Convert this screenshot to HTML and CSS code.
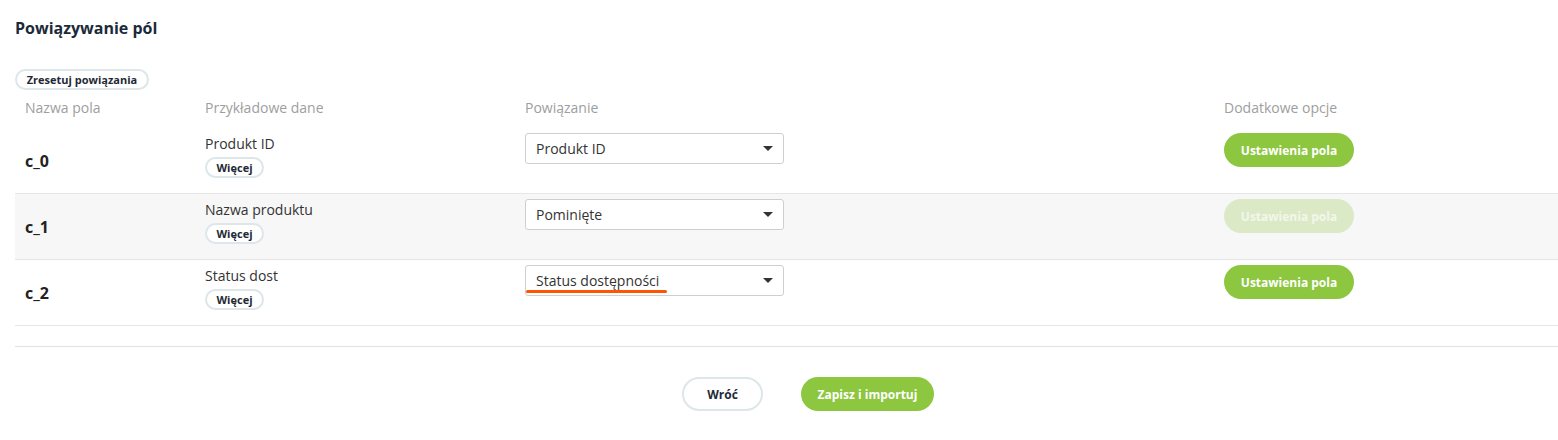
FILE: index.html
```html
<!DOCTYPE html>
<html lang="pl">
<head>
<meta charset="utf-8">
<title>Powiązywanie pól</title>
<link rel="stylesheet" href="styles.css">
</head>
<body>
<div class="page">
  <h1 class="title">Powiązywanie pól</h1>
  <button class="pill reset">Zresetuj powiązania</button>
  <div class="table">
    <div class="row head">
      <div class="cell">Nazwa pola</div>
      <div class="cell">Przykładowe dane</div>
      <div class="cell">Powiązanie</div>
      <div class="cell">Dodatkowe opcje</div>
    </div>
    <div class="row">
      <div class="cell name">c_0</div>
      <div class="cell sample"><div class="sample-text">Produkt ID</div><button class="pill more">Więcej</button></div>
      <div class="cell"><div class="select"><span class="select-text">Produkt ID</span><span class="caret"></span></div></div>
      <div class="cell"><button class="btn-green">Ustawienia pola</button></div>
    </div>
    <div class="row alt">
      <div class="cell name">c_1</div>
      <div class="cell sample"><div class="sample-text">Nazwa produktu</div><button class="pill more">Więcej</button></div>
      <div class="cell"><div class="select"><span class="select-text">Pominięte</span><span class="caret"></span></div></div>
      <div class="cell"><button class="btn-green disabled">Ustawienia pola</button></div>
    </div>
    <div class="row">
      <div class="cell name">c_2</div>
      <div class="cell sample"><div class="sample-text">Status dost</div><button class="pill more">Więcej</button></div>
      <div class="cell"><div class="select"><span class="select-text">Status dostępności</span><span class="caret"></span><span class="squiggle"></span></div></div>
      <div class="cell"><button class="btn-green">Ustawienia pola</button></div>
    </div>
  </div>
  <div class="footer">
    <button class="btn-outline">Wróć</button>
    <button class="btn-green btn-save">Zapisz i importuj</button>
  </div>
</div>
</body>
</html>
```

FILE: styles.css
```css
* { box-sizing: border-box; }
html, body { margin: 0; padding: 0; background: #fff; }
body { font-family: "Open Sans", "Noto Sans", sans-serif; color: #333; }
button { font-family: inherit; cursor: pointer; margin: 0; white-space: nowrap; }

.page { padding: 18px 0 0 15px; }

.title {
  margin: 0;
  font-size: 16px;
  line-height: 20px;
  font-weight: 700;
  color: #1b2a3a;
}

.pill {
  display: inline-flex;
  align-items: center;
  justify-content: center;
  height: 21px;
  border: 2px solid #dde7e9;
  border-radius: 11px;
  background: #fff;
  font-size: 11px;
  font-weight: 700;
  color: #1e2a36;
  padding: 0;
  line-height: 1;
}
.reset { margin-top: 31px; width: 134px; }

.table { display: flex; flex-direction: column; }
.row {
  display: grid;
  grid-template-columns: 180px 320px 699px 1fr;
  height: 66px;
  padding-top: 6px;
  border-bottom: 1px solid #e6e6e6;
}
.row.alt { background: #f7f7f7; }
.row.head {
  height: 38px;
  padding-top: 8px;
  border-bottom: none;
  color: #9e9e9e;
  font-size: 14px;
  line-height: 20px;
}
.cell { padding: 0 10px; }
.name {
  align-self: center;
  margin-top: -6px;
  font-size: 16px;
  font-weight: 700;
  color: #222;
}
.sample-text { font-size: 14px; line-height: 20px; color: #333; }
.more { margin-top: 3px; width: 59px; height: 21px; }

.select {
  position: relative;
  display: flex;
  align-items: center;
  width: 259px;
  height: 31px;
  margin-top: -1px;
  border: 1px solid #cfcfcf;
  border-radius: 3px;
  background: #fff;
  padding: 0 10px;
  font-size: 14px;
  color: #333;
}
.select-text { flex: 1; }
.caret {
  width: 0; height: 0;
  border-left: 5px solid transparent;
  border-right: 5px solid transparent;
  border-top: 5px solid #333;
}
.squiggle {
  position: absolute;
  left: 0;
  top: 24px;
  width: 141px;
  height: 3px;
  border-radius: 2px;
  background: #ff5500;
}

.btn-green {
  height: 34px;
  width: 130px;
  margin-top: -1px;
  border: none;
  border-radius: 17px;
  background: #8dc63f;
  color: #fff;
  font-size: 12px;
  font-weight: 700;
  padding: 0;
}
.btn-green.disabled { background: #dbe9c7; color: #f2f7ea; cursor: default; }

.footer {
  margin-top: 20px;
  border-top: 1px solid #dde3e6;
  padding: 30px 0 30px 43px;
  display: flex;
  justify-content: center;
  gap: 38px;
}
.footer .btn-green { margin-top: 0; }
.btn-outline {
  height: 34px;
  width: 81px;
  border: 2px solid #dde7e9;
  border-radius: 17px;
  background: #fff;
  color: #1e2a36;
  font-size: 12px;
  font-weight: 700;
  padding: 0;
}
.btn-save { width: 133px; }
```
